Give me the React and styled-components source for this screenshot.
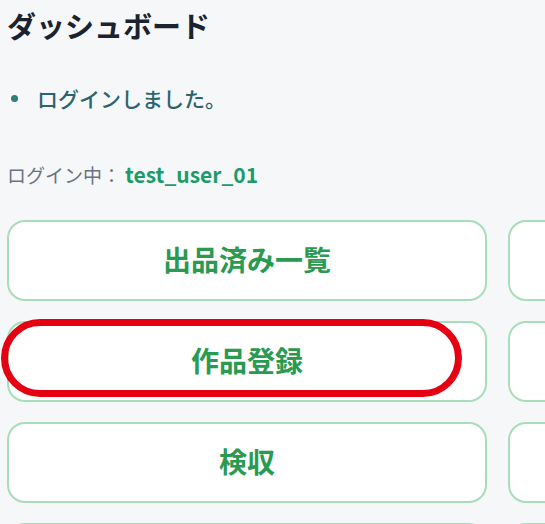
import styled, { createGlobalStyle } from "styled-components";

const GlobalStyle = createGlobalStyle`
  html, body {
    margin: 0;
    padding: 0;
    background: #f5f7f9;
    overflow: hidden;
  }
  body {
    font-family: "Noto Sans CJK JP", "Noto Sans", sans-serif;
  }
`;

const Page = styled.div`
  width: 1000px;
  padding: 0 0 0 7px;
`;

const Title = styled.h1`
  margin: 0;
  padding-top: 4px;
  font-size: 29px;
  line-height: 42px;
  font-weight: 700;
  color: #1b2230;
`;

const Messages = styled.ul`
  list-style: none;
  margin: 37px 0 0;
  padding: 0;
`;

const Message = styled.li`
  display: flex;
  align-items: center;
  height: 30px;
  font-size: 21px;
  font-weight: 500;
  color: #2c6470;
`;

const Dot = styled.span`
  width: 7px;
  height: 7px;
  border-radius: 50%;
  background: #2e7d78;
  margin: 0 19px 0 4px;
`;

const UserLine = styled.p`
  margin: 47px 0 0;
  font-size: 19px;
  line-height: 28px;
  color: #6b7280;
`;

const UserName = styled.span`
  margin-left: 4px;
  font-size: 21px;
  color: #1c9b6a;
  font-weight: 700;
`;

const Grid = styled.div`
  display: grid;
  grid-template-columns: 480px 480px;
  grid-auto-rows: 81px;
  column-gap: 21px;
  row-gap: 20px;
  margin-top: 31px;
`;

const Cell = styled.div`
  position: relative;
`;

const MenuButton = styled.button`
  width: 100%;
  height: 100%;
  box-sizing: border-box;
  padding: 0 0 3px;
  background: #ffffff;
  border: 2px solid #a8ddbb;
  border-radius: 18px;
  font-family: "Noto Sans CJK JP", sans-serif;
  font-size: 28px;
  font-weight: 700;
  color: #2a9a50;
  cursor: pointer;
`;

const Highlight = styled.div`
  position: absolute;
  left: -6px;
  top: -2px;
  width: 461px;
  height: 78px;
  box-sizing: border-box;
  border: 7px solid #e50012;
  border-radius: 40px;
  pointer-events: none;
`;

const menu = [
  { label: "出品済み一覧" },
  { label: "" },
  { label: "作品登録", marked: true },
  { label: "" },
  { label: "検収" },
  { label: "" },
  { label: "" },
  { label: "" },
];

export default function App() {
  return (
    <>
      <GlobalStyle />
      <Page>
        <Title>ダッシュボード</Title>
        <Messages>
          <Message>
            <Dot />
            ログインしました。
          </Message>
        </Messages>
        <UserLine>
          ログイン中：<UserName>test_user_01</UserName>
        </UserLine>
        <Grid>
          {menu.map((item, i) => (
            <Cell key={i}>
              <MenuButton>{item.label}</MenuButton>
              {item.marked && <Highlight />}
            </Cell>
          ))}
        </Grid>
      </Page>
    </>
  );
}
